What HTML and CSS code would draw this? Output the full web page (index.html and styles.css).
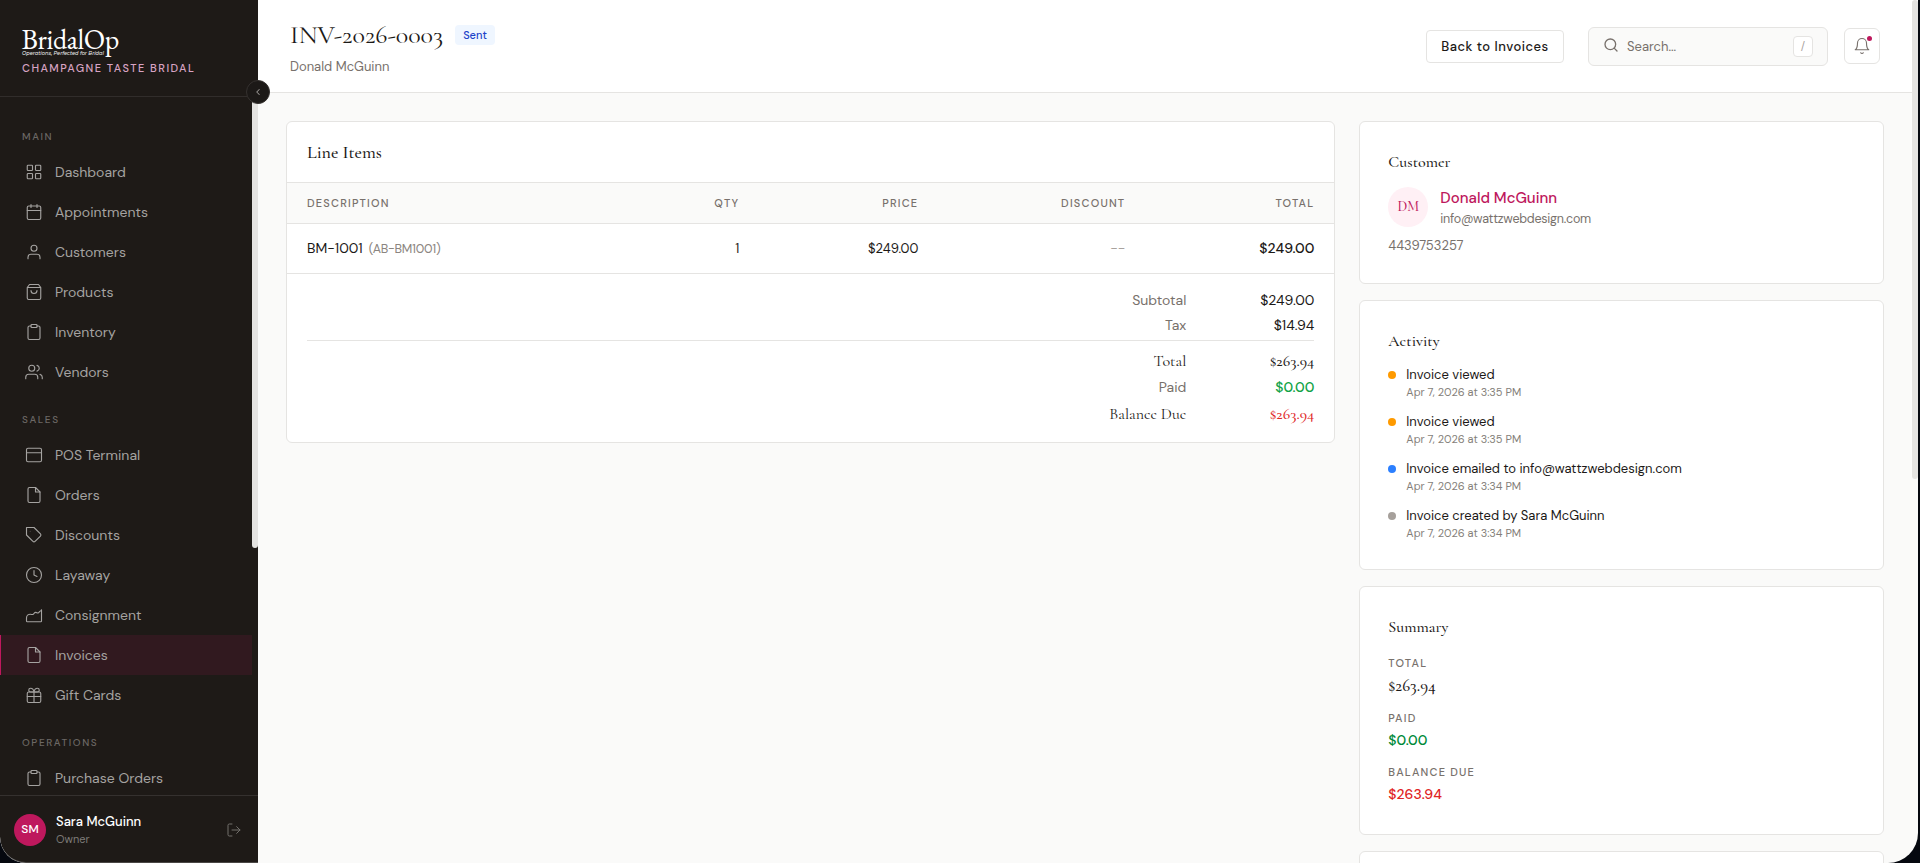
FILE: index.html
```html
<!DOCTYPE html>
<html lang="en">
<head>
<meta charset="utf-8">
<title>INV-2026-0003 - BridalOp</title>
<link rel="stylesheet" href="styles.css">
</head>
<body>
<div class="app">
  <aside class="sidebar">
    <div class="brand">
      <div class="logo">BridalOp</div>
      <div class="tagline">Operations, Perfected for Bridal</div>
      <div class="store">CHAMPAGNE TASTE BRIDAL</div>
    </div>
    <button class="collapse" aria-label="Collapse"><svg viewBox="0 0 24 24"><path d="M15 18l-6-6 6-6"/></svg></button>
    <nav class="nav">
      <div class="nav-label">MAIN</div>
      <a class="item"><svg viewBox="0 0 24 24"><rect x="3" y="3" width="7" height="7" rx="1"/><rect x="14" y="3" width="7" height="7" rx="1"/><rect x="3" y="14" width="7" height="7" rx="1"/><rect x="14" y="14" width="7" height="7" rx="1"/></svg><span>Dashboard</span></a>
      <a class="item"><svg viewBox="0 0 24 24"><rect x="3" y="4" width="18" height="18" rx="2"/><path d="M16 2v4M8 2v4M3 10h18"/></svg><span>Appointments</span></a>
      <a class="item"><svg viewBox="0 0 24 24"><path d="M20 21v-2a4 4 0 0 0-4-4H8a4 4 0 0 0-4 4v2"/><circle cx="12" cy="7" r="4"/></svg><span>Customers</span></a>
      <a class="item"><svg viewBox="0 0 24 24"><path d="M6 2L3 6v14a2 2 0 0 0 2 2h14a2 2 0 0 0 2-2V6l-3-4zM3 6h18M16 10a4 4 0 0 1-8 0"/></svg><span>Products</span></a>
      <a class="item"><svg viewBox="0 0 24 24"><path d="M16 4h2a2 2 0 0 1 2 2v14a2 2 0 0 1-2 2H6a2 2 0 0 1-2-2V6a2 2 0 0 1 2-2h2"/><rect x="8" y="2" width="8" height="4" rx="1"/></svg><span>Inventory</span></a>
      <a class="item"><svg viewBox="0 0 24 24"><path d="M17 21v-2a4 4 0 0 0-4-4H5a4 4 0 0 0-4 4v2"/><circle cx="9" cy="7" r="4"/><path d="M23 21v-2a4 4 0 0 0-3-3.87M16 3.13a4 4 0 0 1 0 7.75"/></svg><span>Vendors</span></a>
      <div class="nav-label">SALES</div>
      <a class="item"><svg viewBox="0 0 24 24"><rect x="2" y="3" width="20" height="18" rx="2"/><path d="M2 9h20"/></svg><span>POS Terminal</span></a>
      <a class="item"><svg viewBox="0 0 24 24"><path d="M14 2H6a2 2 0 0 0-2 2v16a2 2 0 0 0 2 2h12a2 2 0 0 0 2-2V8z"/><path d="M14 2v6h6"/></svg><span>Orders</span></a>
      <a class="item"><svg viewBox="0 0 24 24"><path d="M20.600 13.400l-7.200 7.200a2 2 0 0 1-2.800 0L2 12V2h10l8.600 8.600a2 2 0 0 1 0 2.800z"/><path class="faint" d="M7 7h.01"/></svg><span>Discounts</span></a>
      <a class="item"><svg viewBox="0 0 24 24"><circle cx="12" cy="12" r="10"/><path d="M12 6v6l4 2"/></svg><span>Layaway</span></a>
      <a class="item"><svg viewBox="0 0 24 24"><path d="M2 20v-4c0-3 2.500-5 5-5 2 0 2.500 1 4 0s1.500-3 3.500-2.500 2 1.500 3.500.5 1-2 2-2 1 0 2-2v15a1 1 0 0 1-1 1H3a1 1 0 0 1-1-1z"/></svg><span>Consignment</span></a>
      <a class="item active"><svg viewBox="0 0 24 24"><path d="M14 2H6a2 2 0 0 0-2 2v16a2 2 0 0 0 2 2h12a2 2 0 0 0 2-2V8z"/><path d="M14 2v6h6"/></svg><span>Invoices</span></a>
      <a class="item"><svg viewBox="0 0 24 24"><rect x="3" y="8" width="18" height="14" rx="2"/><path d="M3 14h18M12 8v14M12 8H7.500a2.500 2.500 0 1 1 0-5C11 3 12 8 12 8zM12 8h4.500a2.500 2.500 0 1 0 0-5C13 3 12 8 12 8z"/></svg><span>Gift Cards</span></a>
      <div class="nav-label">OPERATIONS</div>
      <a class="item"><svg viewBox="0 0 24 24"><path d="M16 4h2a2 2 0 0 1 2 2v14a2 2 0 0 1-2 2H6a2 2 0 0 1-2-2V6a2 2 0 0 1 2-2h2"/><rect x="8" y="2" width="8" height="4" rx="1"/></svg><span>Purchase Orders</span></a>
      <div class="nav-thumb"></div>
    </nav>
    <div class="user">
      <div class="user-avatar">SM</div>
      <div class="user-info">
        <div class="user-name">Sara McGuinn</div>
        <div class="user-role">Owner</div>
      </div>
      <svg class="logout" viewBox="0 0 24 24"><path d="M9 21H5a2 2 0 0 1-2-2V5a2 2 0 0 1 2-2h4M16 17l5-5-5-5M21 12H9"/></svg>
    </div>
  </aside>
  <main class="main">
    <header class="topbar">
      <div class="heading">
        <div class="title-row"><h1>INV-2026-0003</h1><span class="badge">Sent</span></div>
        <div class="subtitle">Donald McGuinn</div>
      </div>
      <button class="back">Back to Invoices</button>
      <div class="search">
        <svg viewBox="0 0 24 24"><circle cx="11" cy="11" r="8"/><path d="M21 21l-4.300-4.300"/></svg>
        <span class="search-text">Search...</span>
        <kbd>/</kbd>
      </div>
      <button class="bell" aria-label="Notifications"><svg viewBox="0 0 24 24"><path d="M18 8A6 6 0 0 0 6 8c0 7-3 9-3 9h18s-3-2-3-9M13.730 21a2 2 0 0 1-3.460 0"/></svg><i class="bell-dot"></i></button>
    </header>
    <div class="content">
      <section class="card lines">
        <h2 class="lines-title">Line Items</h2>
        <div class="row head"><div>DESCRIPTION</div><div>QTY</div><div>PRICE</div><div>DISCOUNT</div><div>TOTAL</div></div>
        <div class="row line"><div>BM-1001<span class="sku">(AB-BM1001)</span></div><div class="small">1</div><div class="small">$249.00</div><div class="none">--</div><div class="strong">$249.00</div></div>
        <div class="totals">
          <div class="sum"><span class="k">Subtotal</span><span class="v">$249.00</span></div>
          <div class="sum"><span class="k">Tax</span><span class="v">$14.94</span></div>
          <div class="sum grand"><span class="k">Total</span><span class="v">$263.94</span></div>
          <div class="sum paid"><span class="k">Paid</span><span class="v">$0.00</span></div>
          <div class="sum due"><span class="k">Balance Due</span><span class="v">$263.94</span></div>
        </div>
      </section>
      <div class="side">
        <section class="card panel customer">
          <h3>Customer</h3>
          <div class="person">
            <div class="initials">DM</div>
            <div><div class="person-name">Donald McGuinn</div><div class="person-mail">info@wattzwebdesign.com</div></div>
          </div>
          <div class="phone">4439753257</div>
        </section>
        <section class="card panel activity">
          <h3>Activity</h3>
          <div class="event"><i class="dot amber"></i><div><div class="what">Invoice viewed</div><div class="when">Apr 7, 2026 at 3:35 PM</div></div></div>
          <div class="event"><i class="dot amber"></i><div><div class="what">Invoice viewed</div><div class="when">Apr 7, 2026 at 3:35 PM</div></div></div>
          <div class="event"><i class="dot blue"></i><div><div class="what">Invoice emailed to info@wattzwebdesign.com</div><div class="when">Apr 7, 2026 at 3:34 PM</div></div></div>
          <div class="event"><i class="dot gray"></i><div><div class="what">Invoice created by Sara McGuinn</div><div class="when">Apr 7, 2026 at 3:34 PM</div></div></div>
        </section>
        <section class="card panel summary">
          <h3>Summary</h3>
          <div class="label">TOTAL</div><div class="amount serif">$263.94</div>
          <div class="label">PAID</div><div class="amount green">$0.00</div>
          <div class="label">BALANCE DUE</div><div class="amount red">$263.94</div>
        </section>
        <section class="card panel next"></section>
      </div>
      <div class="page-thumb"></div>
    </div>
  </main>
</div>
</body>
</html>
```

FILE: styles.css
```css
* { box-sizing: border-box; }
body { margin: 0; background: #05080f; font-family: "DM Sans", Inter, "Liberation Sans", sans-serif; font-size: 14px; color: #1c1917; }
h1, h2, h3 { margin: 0; font-weight: 500; font-family: "Cormorant Garamond", "Liberation Serif", serif; }
svg { fill: none; stroke: currentColor; stroke-width: 1.5; stroke-linecap: round; stroke-linejoin: round; flex: none; }
button { font: inherit; padding: 0; }

.app { display: flex; height: 863px; margin-right: 2px; overflow: hidden; border-radius: 0 0 30px 26px; background: #fafaf9; }

.sidebar { position: relative; display: flex; flex-direction: column; width: 258px; flex: none; background: #1e1a17; border-bottom: 1px solid #4a4745; border-bottom-left-radius: 26px; z-index: 1; }
.brand { height: 97px; padding: 24px 22px 0; border-bottom: 1px solid #312d2b; white-space: nowrap; flex: none; }
.logo { font: 28px/30px "EB Garamond", "Liberation Serif", serif; letter-spacing: -.4px; height: 26px; margin-left: -.5px; color: #fff; }
.tagline { font-family: Montserrat, "DM Sans", sans-serif; font-size: 5px; font-style: italic; font-weight: 500; line-height: 7px; letter-spacing: .03px; color: #eee; }
.store { margin-top: 4px; font-size: 11px; font-weight: 500; line-height: 14px; letter-spacing: 1.45px; color: #d8a3c3; }
.collapse { position: absolute; top: 80px; left: 246px; width: 24px; height: 24px; border-radius: 50%; border: 1px solid #35312f; background: #1c1917; color: #9a9794; display: grid; place-items: center; z-index: 3; }
.collapse svg { width: 10px; height: 10px; stroke-width: 2.5; }
.nav { position: relative; flex: 1; overflow: hidden; padding: 12px 6px 0 0; }
.nav-label { height: 43px; padding: 21px 22px 0; font-size: 10px; font-weight: 500; line-height: 14px; letter-spacing: 1.6px; color: #6c6865; }
.item { display: flex; align-items: center; gap: 12px; height: 40px; padding-left: 25px; font-size: 14px; color: #a5a3a1; }
.item svg { width: 18px; height: 18px; }
.faint { opacity: .4; }
.item.active { background: #31191f; box-shadow: inset 1px 0 #be185d; }
.nav-thumb { position: absolute; right: 0; top: 0; width: 6px; height: 451px; background: #e4e3e1; border-radius: 3px; }
.user { display: flex; align-items: center; gap: 10px; height: 67px; flex: none; padding: 2px 16px 0 14px; border-top: 1px solid #35312f; }
.user-avatar { width: 32px; height: 32px; border-radius: 50%; background: #be185d; color: #fff; font-size: 12px; font-weight: 500; line-height: 30px; text-align: center; }
.user-info { flex: 1; }
.user-name { font-size: 13px; font-weight: 500; line-height: 18px; color: #fff; }
.user-role { font-size: 11px; line-height: 16px; color: #7d7a77; }
.logout { width: 16px; height: 16px; color: #73706d; }

.main { flex: 1; display: flex; flex-direction: column; }
.topbar { display: flex; align-items: center; height: 93px; flex: none; padding: 0 38px 0 32px; background: #fff; border-bottom: 1px solid #e5e4e2; }
.heading { flex: 1; }
.title-row { display: flex; align-items: center; gap: 12px; height: 34px; }
h1 { font-size: 26px; font-weight: 400; line-height: 34px; }
.badge { padding: 0 8px; border-radius: 4px; background: #eff6ff; color: #1d44c9; font-size: 11px; font-weight: 500; line-height: 20px; }
.subtitle { padding-top: 6px; margin-bottom: -1px; font-size: 13px; line-height: 18px; color: #78716c; }
.back { width: 138px; height: 33px; border: 1px solid #e5e4e2; border-radius: 4px; background: #fff; font-size: 13px; font-weight: 500; letter-spacing: .5px; color: #1c1917; }
.search { display: flex; align-items: center; width: 240px; height: 39px; margin: 0 16px 0 24px; padding: 0 14px; border: 1px solid #e5e4e2; border-radius: 6px; background: #fafaf9; color: #78716c; font-size: 13px; }
.search svg { width: 16px; height: 16px; margin-top: -2px; stroke-width: 2; }
.search-text { margin-left: 8px; }
kbd { margin-left: auto; width: 20px; height: 21px; border: 1px solid #e5e4e2; border-radius: 4px; background: #fff; color: #a8a29e; font: 11px/19px "DM Sans", sans-serif; text-align: center; }
.bell { position: relative; width: 36px; height: 36px; border: 1px solid #e5e4e2; border-radius: 6px; background: #fff; color: #78716c; display: grid; place-items: center; }
.bell svg { width: 18px; height: 18px; }
.bell-dot { position: absolute; top: 7px; right: 7px; width: 5px; height: 5px; border-radius: 50%; background: #be185d; }

.content { position: relative; flex: 1; min-height: 0; overflow: hidden; display: grid; grid-template-columns: 2fr 1fr; gap: 24px; align-items: start; padding: 28px 34px 0 28px; }
.page-thumb { position: fixed; right: 2px; top: 0; width: 6px; height: 479px; border-radius: 3px; background: #e4e3e1; }
.card { background: #fff; border: 1px solid #e5e4e2; border-radius: 6px; }
.lines-title { height: 61px; padding-left: 20px; font-size: 18px; line-height: 60px; border-bottom: 1px solid #e5e4e2; }
.row { display: grid; grid-template-columns: 1fr 80px 179px 207px 189px; border-bottom: 1px solid #e5e4e2; }
.row > div { padding: 0 20px; text-align: right; white-space: nowrap; }
.row > div:first-child { text-align: left; }
.head { height: 41px; line-height: 40px; background: #fafaf9; font-size: 11px; font-weight: 500; letter-spacing: 1.2px; color: #78716c; }
.line { height: 50px; line-height: 49px; font-size: 14px; }
.sku { margin-left: 6px; font-size: 12.5px; letter-spacing: -.26px; color: #8b8580; }
.small { font-size: 13px; }
.none { color: #a8a29e; }
.strong { font-weight: 500; }
.totals { padding: 14px 20px; }
.sum { display: flex; justify-content: flex-end; height: 25px; line-height: 25px; font-size: 14px; }
.k { color: #78716c; }
.v { width: 128px; text-align: right; }
.grand, .due { font-family: "Cormorant Garamond", "Liberation Serif", serif; font-size: 16px; }
.grand .k, .due .k { color: #1c1917; }
.grand .v, .due .v { font-weight: 500; }
.grand { height: 35px; border-top: 1px solid #e5e4e2; padding-top: 8px; margin-top: 2px; }
.paid .v { color: #12a347; font-weight: 500; }
.due { height: 28px; line-height: 28px; }
.due .v { color: #e02424; }

.side { display: flex; flex-direction: column; gap: 16px; }
.panel { padding: 28px; }
h3 { font-size: 16px; line-height: 24px; }
.customer { height: 163px; }
.person { display: flex; gap: 12px; height: 40px; margin-top: 13px; }
.initials { width: 40px; height: 40px; border-radius: 50%; background: #fff0f5; color: #be185d; font: 500 14px/40px "Cormorant Garamond", "Liberation Serif", serif; text-align: center; }
.person-name { padding-top: 1px; font-size: 15px; font-weight: 500; line-height: 21px; color: #be185d; }
.person-mail { font-size: 12.5px; line-height: 20px; letter-spacing: -.24px; color: #78716c; }
.phone { margin-top: 10px; font-size: 13px; line-height: 18px; color: #78716c; }
.activity { height: 270px; }
.event { display: flex; gap: 10px; height: 47px; }
.activity h3 { margin-bottom: 12px; }
.dot { width: 8px; height: 8px; margin-top: 6px; border-radius: 50%; }
.amber { background: #fe9a00; }
.blue { background: #2b7fff; }
.gray { background: #a6a09b; }
.what { font-size: 13px; line-height: 19px; }
.when { padding-top: 1px; font-size: 11px; line-height: 15px; color: #857f7a; }
.summary { height: 249px; }
.summary h3 { margin-bottom: 15px; }
.label { font-size: 11px; font-weight: 500; line-height: 18px; letter-spacing: 1.2px; color: #78716c; }
.amount { margin: 2px 0 11px; font-size: 14px; font-weight: 500; line-height: 23px; }
.amount.serif { font: 500 17px/24px "Cormorant Garamond", "Liberation Serif", serif; }
.green { color: #008a3a; }
.red { color: #e02424; }
.next { height: 60px; }
```
